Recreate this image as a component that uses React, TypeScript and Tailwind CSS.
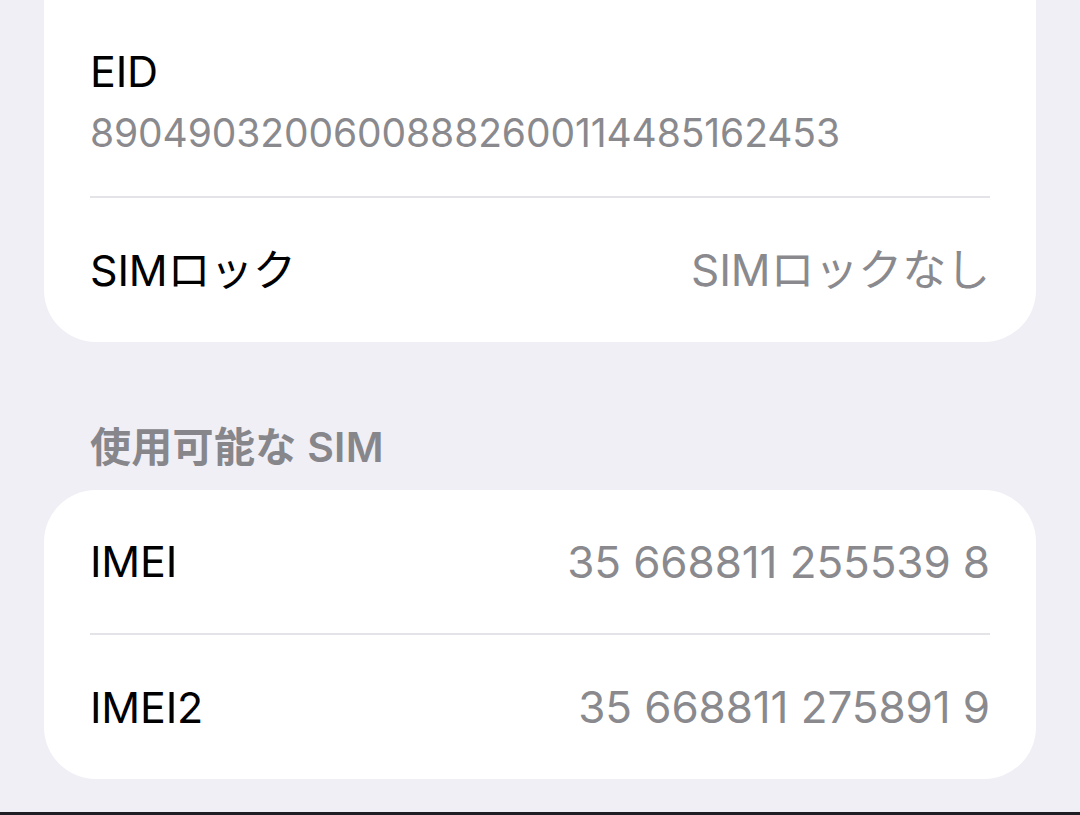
const FONT = "font-['Inter','Noto_Sans_CJK_JP',sans-serif]";

function Row({ label, value, tall }: { label: string; value: string; tall?: boolean }) {
  return (
    <div className={`${tall ? "h-[144px]" : "h-[143px]"} flex items-center justify-between`}>
      <span className="text-[43px] text-black tracking-[-0.2px]">{label}</span>
      <span className="text-[44px] text-[#8a8a8e] tracking-[-0.1px]">{value}</span>
    </div>
  );
}

function Divider() {
  return <div className="h-[2px] bg-[#e4e4e8]" />;
}

export default function App() {
  return (
    <div className={`h-[815px] overflow-hidden bg-[#f0eff5] flex flex-col ${FONT}`}>
      <div className="mx-[44px] bg-white rounded-b-[52px] px-[46px] pt-[43px]">
        <div className="pb-[38px]">
          <div className="text-[43px] leading-[56px] text-black tracking-[-0.2px]">EID</div>
          <div className="text-[39px] leading-[50px] text-[#8a8a8e] mt-[9px] tracking-[-0.1px]">
            89049032006008882600114485162453
          </div>
        </div>
        <Divider />
        <Row label="SIMロック" value="SIMロックなし" tall />
      </div>

      <div className="px-[90px] pt-[80px] pb-[18px] text-[41px] leading-[50px] font-semibold text-[#86868b] tracking-[0.3px]">
        使用可能な SIM
      </div>

      <div className="mx-[44px] bg-white rounded-[52px] px-[46px]">
        <Row label="IMEI" value="35 668811 255539 8" />
        <Divider />
        <Row label="IMEI2" value="35 668811 275891 9" tall />
      </div>

      <div className="flex-1" />
      <div className="h-[3px] bg-[#1e1e24]" />
    </div>
  );
}
